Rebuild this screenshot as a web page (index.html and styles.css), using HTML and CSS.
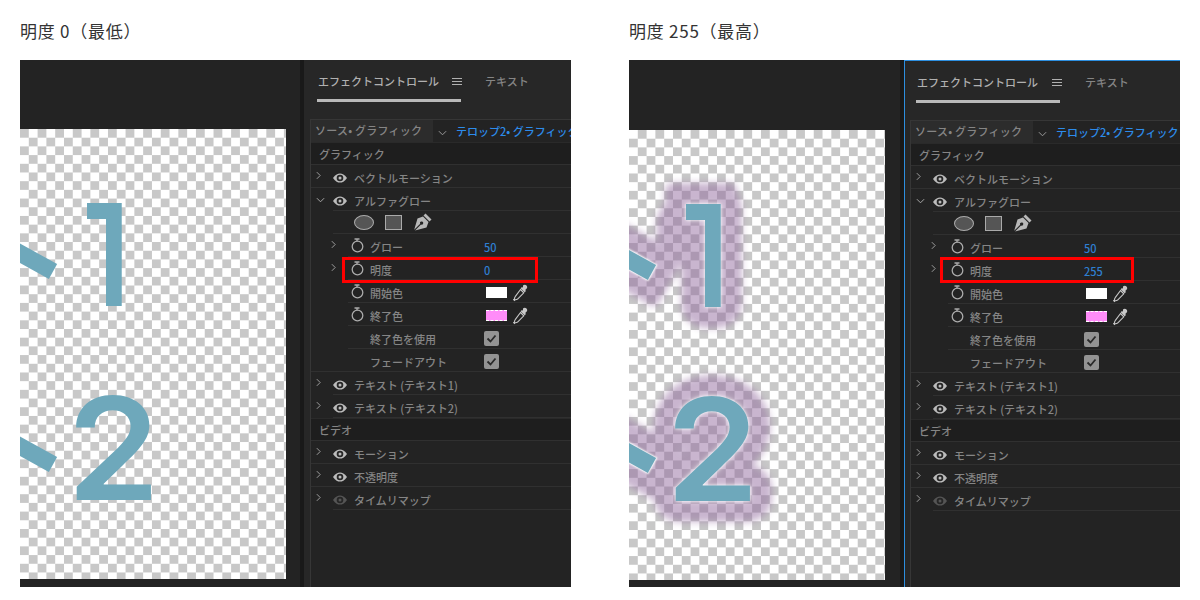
FILE: index.html
```html
<!DOCTYPE html>
<html lang="ja">
<head>
<meta charset="utf-8">
<title>明度の比較</title>
<link rel="stylesheet" href="styles.css">
</head>
<body>
<svg class="defs" width="0" height="0" aria-hidden="true">
  <symbol id="i-right" viewBox="0 0 6 10"><path d="M1 1l4 4-4 4" fill="none" stroke="currentColor" stroke-width="1.1"/></symbol>
  <symbol id="i-down" viewBox="0 0 10 6"><path d="M1 1l4 4 4-4" fill="none" stroke="currentColor" stroke-width="1.1"/></symbol>
  <symbol id="i-eye" viewBox="0 0 14 10"><path d="M0 5C2.500 1.300 4.800 .4 7 .4S11.500 1.300 14 5C11.500 8.700 9.200 9.600 7 9.600S2.500 8.700 0 5Z" fill="currentColor"/><circle cx="7" cy="5" r="3.300" fill="#262626"/><circle cx="7" cy="5" r="1.500" fill="currentColor"/></symbol>
  <symbol id="i-watch" viewBox="0 0 13 15"><circle cx="6.500" cy="8.500" r="5.300" fill="none" stroke="currentColor" stroke-width="1.300"/><path d="M3.500 1h5M6 1v2.500" fill="none" stroke="currentColor" stroke-width="1.300"/></symbol>
  <symbol id="i-drop" viewBox="0 0 16 18"><path d="M10 1.500c1-1 2.600-1 3.500 0s1 2.400 0 3.300l-1.300 1.200.8.900-1.400 1.400-4-4 1.400-1.400.9.800Z" fill="#c8c8c8"/><path d="M7.500 5.500l3.300 3.300-6 6c-.7.700-1.600.9-2.500.9l-.8.800-.8-.8.800-.8c0-.9.200-1.800.9-2.500Z" fill="none" stroke="#c8c8c8" stroke-width="1.100"/></symbol>
  <symbol id="i-pen" viewBox="0 0 18 18"><path d="M11.500 .5l6 6-2 2-6-6Z" fill="#b8b8b8"/><path d="M9 3.500l5.500 5.500-2 5.500L1 17.500 7 11.500a1.600 1.600 0 1 0-.8-.8L.2 16.700 3.500 5.500Z" fill="#b8b8b8"/></symbol>
  <symbol id="i-check" viewBox="0 0 15 15"><path d="M3.500 7.500l3 3 5-6" fill="none" stroke="#2a2a2a" stroke-width="1.800"/></symbol>
</svg>

<main class="page">
  <figure class="sample">
    <figcaption class="caption">明度 0（最低）</figcaption>
    <div class="shot">
      <div class="viewer">
        <div class="canvas">
          <div class="art">
            <span class="dash dash-a"></span>
            <span class="dash dash-b"></span>
            <span class="digit digit-one"><span class="edge"><span class="ink">1</span></span></span>
            <span class="digit digit-two"><span class="edge"><span class="ink">2</span></span></span>
          </div>
        </div>
      </div>
      <div class="strip"></div>
      <section class="panel">
        <div class="tabs">
          <span class="tab tab-on">エフェクトコントロール</span>
          <span class="menu"><i></i><i></i><i></i></span>
          <span class="tab">テキスト</span>
        </div>
        <div class="list">
          <div class="source"><span class="source-name">ソース• グラフィック</span><svg class="chev-down src-chev"><use href="#i-down"/></svg><span class="source-clip">テロップ2• グラフィック</span></div>
          <div class="head">グラフィック</div>
          <div class="row line"><span class="gut"><svg class="chev"><use href="#i-right"/></svg></span><div class="cell"><svg class="eye"><use href="#i-eye"/></svg><span>ベクトルモーション</span></div></div>
          <div class="row"><span class="gut"><svg class="chev-down"><use href="#i-down"/></svg></span><div class="cell"><svg class="eye"><use href="#i-eye"/></svg><span>アルファグロー</span></div></div>
          <div class="row"><span class="gut"></span><div class="cell tools"><span class="shape-ellipse"></span><span class="shape-rect"></span><svg class="pen"><use href="#i-pen"/></svg></div></div>
          <div class="row"><span class="gut wide"><svg class="chev"><use href="#i-right"/></svg></span><div class="cell param"><svg class="watch"><use href="#i-watch"/></svg><span class="name">グロー</span><span class="value">50</span></div></div>
          <div class="row"><span class="gut wide"><svg class="chev"><use href="#i-right"/></svg></span><div class="cell param"><svg class="watch"><use href="#i-watch"/></svg><span class="name">明度</span><span class="value">0</span></div></div>
          <div class="row"><span class="gut wide"></span><div class="cell param"><svg class="watch"><use href="#i-watch"/></svg><span class="name">開始色</span><span class="swatch white"></span><svg class="drop"><use href="#i-drop"/></svg></div></div>
          <div class="row"><span class="gut wide"></span><div class="cell param"><svg class="watch"><use href="#i-watch"/></svg><span class="name">終了色</span><span class="swatch pink"></span><svg class="drop"><use href="#i-drop"/></svg></div></div>
          <div class="row"><span class="gut wide"></span><div class="cell plain"><span class="name">終了色を使用</span><span class="check"><svg><use href="#i-check"/></svg></span></div></div>
          <div class="row line"><span class="gut wide"></span><div class="cell plain"><span class="name">フェードアウト</span><span class="check"><svg><use href="#i-check"/></svg></span></div></div>
          <div class="row"><span class="gut"><svg class="chev"><use href="#i-right"/></svg></span><div class="cell"><svg class="eye"><use href="#i-eye"/></svg><span>テキスト (テキスト1)</span></div></div>
          <div class="row"><span class="gut"><svg class="chev"><use href="#i-right"/></svg></span><div class="cell"><svg class="eye"><use href="#i-eye"/></svg><span>テキスト (テキスト2)</span></div></div>
          <div class="head">ビデオ</div>
          <div class="row line"><span class="gut"><svg class="chev"><use href="#i-right"/></svg></span><div class="cell"><svg class="eye"><use href="#i-eye"/></svg><span>モーション</span></div></div>
          <div class="row line"><span class="gut"><svg class="chev"><use href="#i-right"/></svg></span><div class="cell"><svg class="eye"><use href="#i-eye"/></svg><span>不透明度</span></div></div>
          <div class="row"><span class="gut"><svg class="chev"><use href="#i-right"/></svg></span><div class="cell"><svg class="eye dim"><use href="#i-eye"/></svg><span>タイムリマップ</span></div></div>
        </div>
        <div class="mark"></div>
      </section>
    </div>
  </figure>

  <figure class="sample">
    <figcaption class="caption">明度 255（最高）</figcaption>
    <div class="shot">
      <div class="viewer viewer-active">
        <div class="canvas canvas-active">
          <div class="art art-active art-glow">
            <div class="halo" aria-hidden="true">
              <span class="dash dash-a"></span>
              <span class="dash dash-b"></span>
              <span class="digit digit-one halo-glyph" data-glyph="1"></span>
              <span class="digit digit-two halo-glyph" data-glyph="2"></span>
            </div>
            <span class="dash dash-a"></span>
            <span class="dash dash-b"></span>
            <span class="digit digit-one"><span class="edge"><span class="ink">1</span></span></span>
            <span class="digit digit-two"><span class="edge"><span class="ink">2</span></span></span>
          </div>
        </div>
      </div>
      <div class="strip"></div>
      <section class="panel panel-active">
        <div class="tabs">
          <span class="tab tab-on">エフェクトコントロール</span>
          <span class="menu"><i></i><i></i><i></i></span>
          <span class="tab">テキスト</span>
        </div>
        <div class="list">
          <div class="source"><span class="source-name">ソース• グラフィック</span><svg class="chev-down src-chev"><use href="#i-down"/></svg><span class="source-clip">テロップ2• グラフィック</span></div>
          <div class="head">グラフィック</div>
          <div class="row line"><span class="gut"><svg class="chev"><use href="#i-right"/></svg></span><div class="cell"><svg class="eye"><use href="#i-eye"/></svg><span>ベクトルモーション</span></div></div>
          <div class="row"><span class="gut"><svg class="chev-down"><use href="#i-down"/></svg></span><div class="cell"><svg class="eye"><use href="#i-eye"/></svg><span>アルファグロー</span></div></div>
          <div class="row"><span class="gut"></span><div class="cell tools"><span class="shape-ellipse"></span><span class="shape-rect"></span><svg class="pen"><use href="#i-pen"/></svg></div></div>
          <div class="row"><span class="gut wide"><svg class="chev"><use href="#i-right"/></svg></span><div class="cell param"><svg class="watch"><use href="#i-watch"/></svg><span class="name">グロー</span><span class="value">50</span></div></div>
          <div class="row"><span class="gut wide"><svg class="chev"><use href="#i-right"/></svg></span><div class="cell param"><svg class="watch"><use href="#i-watch"/></svg><span class="name">明度</span><span class="value">255</span></div></div>
          <div class="row"><span class="gut wide"></span><div class="cell param"><svg class="watch"><use href="#i-watch"/></svg><span class="name">開始色</span><span class="swatch white"></span><svg class="drop"><use href="#i-drop"/></svg></div></div>
          <div class="row"><span class="gut wide"></span><div class="cell param"><svg class="watch"><use href="#i-watch"/></svg><span class="name">終了色</span><span class="swatch pink"></span><svg class="drop"><use href="#i-drop"/></svg></div></div>
          <div class="row"><span class="gut wide"></span><div class="cell plain"><span class="name">終了色を使用</span><span class="check"><svg><use href="#i-check"/></svg></span></div></div>
          <div class="row line"><span class="gut wide"></span><div class="cell plain"><span class="name">フェードアウト</span><span class="check"><svg><use href="#i-check"/></svg></span></div></div>
          <div class="row"><span class="gut"><svg class="chev"><use href="#i-right"/></svg></span><div class="cell"><svg class="eye"><use href="#i-eye"/></svg><span>テキスト (テキスト1)</span></div></div>
          <div class="row"><span class="gut"><svg class="chev"><use href="#i-right"/></svg></span><div class="cell"><svg class="eye"><use href="#i-eye"/></svg><span>テキスト (テキスト2)</span></div></div>
          <div class="head">ビデオ</div>
          <div class="row line"><span class="gut"><svg class="chev"><use href="#i-right"/></svg></span><div class="cell"><svg class="eye"><use href="#i-eye"/></svg><span>モーション</span></div></div>
          <div class="row line"><span class="gut"><svg class="chev"><use href="#i-right"/></svg></span><div class="cell"><svg class="eye"><use href="#i-eye"/></svg><span>不透明度</span></div></div>
          <div class="row"><span class="gut"><svg class="chev"><use href="#i-right"/></svg></span><div class="cell"><svg class="eye dim"><use href="#i-eye"/></svg><span>タイムリマップ</span></div></div>
        </div>
        <div class="mark"></div>
      </section>
    </div>
  </figure>
</main>
</body>
</html>
```
FILE: styles.css
```css
* { box-sizing: border-box; }
html, body { margin: 0; height: 100%; background: #fff; }
body { font-family: "Noto Sans CJK JP", "Noto Sans", sans-serif; overflow: hidden; }
.defs { position: absolute; }

.page { display: flex; gap: 58px; padding: 0 20px; }
.sample { margin: 0; width: 551px; }
.caption { height: 60px; padding-top: 19px; font-size: 17px; line-height: 23px; letter-spacing: .75px; color: #333; white-space: nowrap; }
.shot { display: flex; height: 527px; background: #232323; overflow: hidden; }

.viewer { width: 280px; flex: none; padding-top: 69px; background: #232323; }
.viewer-active { width: 271px; padding-top: 70px; }
.canvas {
  position: relative; width: 266px; height: 450px; overflow: hidden;
  background: repeating-conic-gradient(#c8c8c8 0 25%, #fff 0 50%) 8.8px 0 / 17.6px 17.4px;
}
.canvas-active { width: 256px; background-position: 0 0; }
.art { position: absolute; inset: 0; isolation: isolate; }
.art-active { left: -10px; top: 0; }

.digit {
  position: absolute; font-family: Inter, "Liberation Sans", sans-serif; font-size: 142px; font-weight: 600;
  line-height: 142px; color: #6ea8bb;
}
.edge, .ink { display: block; }
.digit-one { left: 52px; top: 54px; }
.digit-two { left: 47px; top: 248px; transform: scaleX(1.05); transform-origin: 0 0; }
.digit-one .ink { clip-path: polygon(15px 20px, 52px 20px, 52px 123px, 34px 123px, 34px 36px, 15px 36px); }
.digit-one .ink::after { content: ""; position: absolute; left: 15px; top: 20px; width: 20px; height: 16px; background: #6ea8bb; }
.dash { position: absolute; width: 60px; height: 17px; background: #6ea8bb; transform: rotate(29deg); transform-origin: 100% 50%; }
.dash-a { left: -27px; top: 134px; }
.dash-b { left: -27px; top: 327px; }

.art-glow .edge { filter: drop-shadow(0 0 1.5px #fff) drop-shadow(0 0 3px rgba(255, 255, 255, .5)); }
.art-glow > .dash { box-shadow: 0 0 2px 1px #fff; }
.halo { position: absolute; inset: 0; opacity: .48; filter: blur(3.5px); }
.halo .dash { background: #8e659b; box-shadow: 0 0 0 21px #8e659b; border-radius: 2px; }
.halo-glyph::before {
  content: attr(data-glyph); color: #8e659b;
  text-shadow:
    21px 0 #8e659b, 20.3px 5.4px #8e659b, 18.2px 10.5px #8e659b, 14.8px 14.8px #8e659b,
    10.5px 18.2px #8e659b, 5.4px 20.3px #8e659b, 0 21px #8e659b, -5.4px 20.3px #8e659b,
    -10.5px 18.2px #8e659b, -14.8px 14.8px #8e659b, -18.2px 10.5px #8e659b, -20.3px 5.4px #8e659b,
    -21px 0 #8e659b, -20.3px -5.4px #8e659b, -18.2px -10.5px #8e659b, -14.8px -14.8px #8e659b,
    -10.5px -18.2px #8e659b, -5.4px -20.3px #8e659b, 0 -21px #8e659b, 5.4px -20.3px #8e659b,
    10.5px -18.2px #8e659b, 14.8px -14.8px #8e659b, 18.2px -10.5px #8e659b, 20.3px -5.4px #8e659b,
    10px 0 #8e659b, -10px 0 #8e659b, 0 10px #8e659b, 0 -10px #8e659b,
    7px 7px #8e659b, -7px 7px #8e659b, 7px -7px #8e659b, -7px -7px #8e659b;
}
.digit-one.halo-glyph::after { content: ""; position: absolute; left: 15px; top: 20px; width: 30px; height: 16px; background: #8e659b; border-radius: 2px; box-shadow: 0 0 0 21px #8e659b; }

.strip { width: 4px; flex: none; background: #191919; }
.panel { position: relative; flex: 1; min-width: 0; background: #272727; overflow: hidden; font-size: 11px; line-height: 16px; color: #858585; white-space: nowrap; font-weight: 500; }
.panel-active { border-top: 1px solid #2d8fe0; border-left: 1px solid #2d8fe0; }

.tabs { display: flex; align-items: center; height: 59px; padding: 0 0 17px 14px; }
.panel-active .tabs { padding-left: 12px; }
.tab { position: relative; color: #858585; flex: none; }
.tab-on { color: #b0b0b0; }
.tab-on::after { content: ""; position: absolute; left: -1px; right: -22px; top: 26px; height: 3px; background: #b9b9b9; }
.menu { display: flex; flex-direction: column; gap: 2px; width: 10px; margin: 0 23px 0 13px; flex: none; }
.panel-active .menu { margin-left: 14px; }
.menu i { height: 1px; background: #b0b0b0; }

.list { height: 468px; margin-left: 6px; border-left: 1px solid #363636; background: #232323; }
.panel-active .list { margin-left: 5px; }
.source { display: flex; align-items: center; height: 23px; border-top: 1px solid #363636; }
.source-name { display: block; flex: none; width: 122px; height: 100%; padding: 2px 0 0 4px; background: #2c2c2c; letter-spacing: .25px; }
.src-chev { flex: none; margin: 0 9px 0 5px; color: #9a9a9a; }
.source-clip { flex: none; color: #2d8ceb; }
.head { height: 23px; padding: 3px 0 0 8px; background: #1e1e1e; border-top: 1px solid #2a2a2a; border-bottom: 1px solid #303030; }

.row { display: flex; height: 23px; }
.row.line { border-bottom: 1px solid #303030; }
.row.line .cell { border-bottom: 0; }
.gut { width: 22px; flex: none; padding: 6px 0 0 5px; color: #a8a8a8; }
.gut.wide { width: 37px; padding-left: 20px; }
.chev { display: block; width: 5px; height: 9px; }
.chev-down { display: block; width: 9px; height: 6px; margin-top: 3px; }
.cell { flex: 1; min-width: 0; display: flex; align-items: center; padding-top: 3px; border-bottom: 1px solid #303030; }
.eye { width: 14px; height: 10px; margin-right: 7px; color: #bcbcbc; flex: none; }
.eye.dim { color: #555; }

.tools { padding: 0 0 0 21px; }
.shape-ellipse { width: 20px; height: 15px; border-radius: 50%; background: #555; border: 1px solid #aaa; margin-right: 11px; }
.shape-rect { width: 17px; height: 15px; background: #555; border: 1px solid #aaa; margin-right: 12px; }
.pen { width: 18px; height: 18px; }

.param { padding-left: 3px; }
.watch { width: 13px; height: 15px; margin: -3px 6px 0 0; color: #aaa; flex: none; }
.name { width: 114px; flex: none; }
.plain { padding-left: 22px; }
.value { color: #2f7fd0; }
.swatch { width: 21px; height: 11px; margin-left: 2px; }
.white { background: #fff; }
.pink { background: #ff8cf8; border-block: 1px dashed #fff; }
.drop { width: 16px; height: 18px; margin-left: 6px; }
.check { width: 15px; height: 15px; border-radius: 2px; background: #939393; }
.check svg { display: block; width: 15px; height: 15px; }

.mark { position: absolute; left: 38px; top: 197px; width: 196px; height: 26px; border: 3px solid #f00; }
.panel-active .mark { left: 35px; top: 196px; width: 194px; }
```
